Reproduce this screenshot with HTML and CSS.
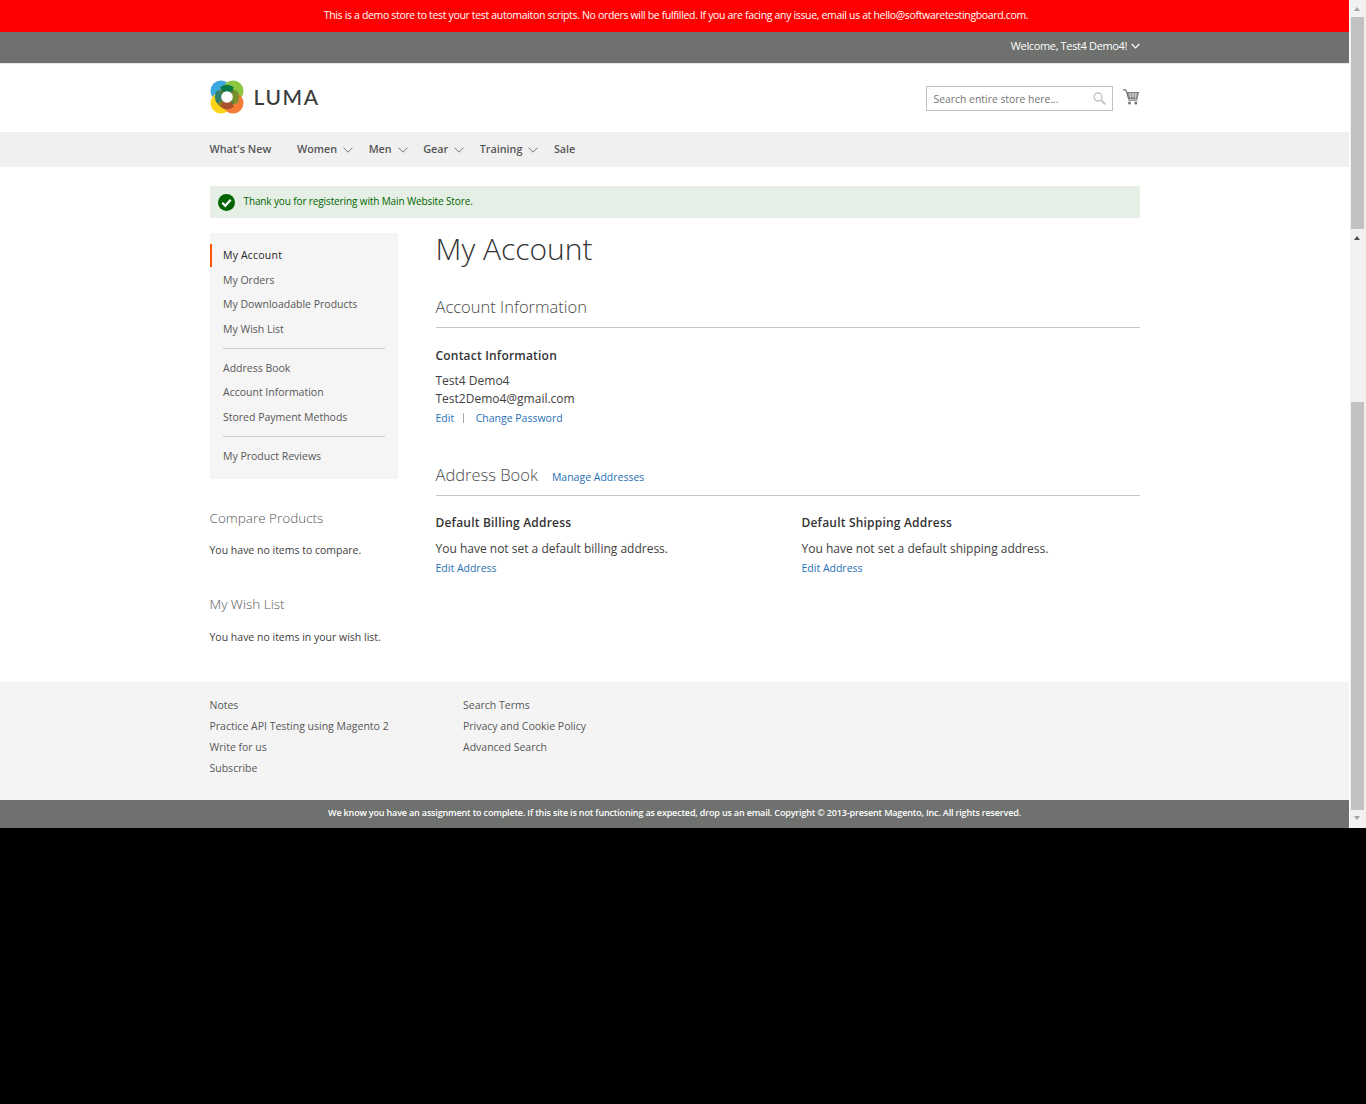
FILE: index.html
```html
<!DOCTYPE html>
<html lang="en">
<head>
<meta charset="utf-8">
<title>My Account</title>
<link rel="stylesheet" href="styles.css">
</head>
<body>
<div class="shot">
  <div class="page">
    <div class="demo-notice">This is a demo store to test your test automaiton scripts. No orders will be fulfilled. If you are facing any issue, email us at hello@softwaretestingboard.com.</div>
    <div class="panel">
      <div class="wrap panel-inner">
        <span>Welcome, Test4 Demo4!</span>
        <svg class="panel-caret" width="9" height="6" viewBox="0 0 9 6"><path d="M.7 1l3.8 3.8L8.300 1" fill="none" stroke="#fff" stroke-width="1.200"/></svg>
      </div>
    </div>
    <header class="wrap header">
      <a class="logo">
        <svg width="34" height="34" viewBox="0 0 34 34">
          <circle cx="11" cy="11" r="10.500" fill="#3ba7dc"/>
          <circle cx="23" cy="11" r="10.500" fill="#8cc63f"/>
          <circle cx="11" cy="23" r="10.500" fill="#fdd31c"/>
          <circle cx="23" cy="23" r="10.500" fill="#f47b36"/>
          <circle cx="17" cy="17" r="10" fill="#5f7d3c"/>
          <path d="M17 17L10 7.500A10.500 10.500 0 0 1 24 7.500z" fill="#0c7a45"/>
          <path d="M17 17L7.500 10A10.500 10.500 0 0 0 7.500 24z" fill="#2f7f6a"/>
          <path d="M17 17L26.500 10A10.500 10.500 0 0 1 26.500 24z" fill="#78912c"/>
          <path d="M17 17L10 26.500A10.500 10.500 0 0 0 24 26.500z" fill="#a5522a"/>
          <path d="M17 17L7.500 24 10 26.500z" fill="#8f7a25"/>
          <circle cx="17" cy="17" r="5.800" fill="#fff"/>
        </svg>
        <span class="logo-text">LUMA</span>
      </a>
      <div class="header-tools">
        <div class="search">
          <span class="search-ph">Search entire store here...</span>
          <svg width="13" height="13" viewBox="0 0 13 13"><circle cx="5" cy="5" r="4" fill="none" stroke="#c2c2c2" stroke-width="1.300"/><path d="M8 8l4.300 4.300" stroke="#c2c2c2" stroke-width="1.800"/></svg>
        </div>
        <svg class="cart" width="16" height="16" viewBox="0 0 16 16">
          <path d="M0 .8h2.600l.9 2.200" fill="none" stroke="#757575" stroke-width="1.300"/>
          <path d="M3 3h13l-1.600 7H5z" fill="#757575"/>
          <path d="M5 5h9.500M5.500 7h8.500M7 3.500l.5 6M10 3.500v6M13 3.500l-.5 6" stroke="#fff" stroke-width=".6"/>
          <path d="M5 10.500h9.500v1.200H5.600z" fill="#757575"/>
          <circle cx="6.500" cy="14" r="1.500" fill="#757575"/>
          <circle cx="12.800" cy="14" r="1.500" fill="#757575"/>
        </svg>
      </div>
    </header>
    <nav class="nav">
      <ul class="wrap nav-list">
        <li class="nav-item nav-first">What's New</li>
        <li class="nav-item">Women<svg class="nav-caret" width="10" height="6" viewBox="0 0 10 6"><path d="M.5.700L5 5.200 9.500.700" fill="none" stroke="#757575"/></svg></li>
        <li class="nav-item">Men<svg class="nav-caret" width="10" height="6" viewBox="0 0 10 6"><path d="M.5.700L5 5.200 9.500.700" fill="none" stroke="#757575"/></svg></li>
        <li class="nav-item">Gear<svg class="nav-caret" width="10" height="6" viewBox="0 0 10 6"><path d="M.5.700L5 5.200 9.500.700" fill="none" stroke="#757575"/></svg></li>
        <li class="nav-item">Training<svg class="nav-caret" width="10" height="6" viewBox="0 0 10 6"><path d="M.5.700L5 5.200 9.500.700" fill="none" stroke="#757575"/></svg></li>
        <li class="nav-item">Sale</li>
      </ul>
    </nav>
    <main class="wrap main">
      <div class="message">
        <svg width="17" height="17" viewBox="0 0 17 17"><circle cx="8.500" cy="8.500" r="8.500" fill="#006400"/><path d="M4.300 8.800l3 3 5.400-6" fill="none" stroke="#fff" stroke-width="2.200"/></svg>
        <span class="message-text">Thank you for registering with Main Website Store.</span>
      </div>
      <div class="columns">
        <aside class="sidebar">
          <div class="side-nav">
            <ul class="side-group">
              <li class="side-link current">My Account</li>
              <li class="side-link">My Orders</li>
              <li class="side-link">My Downloadable Products</li>
              <li class="side-link">My Wish List</li>
            </ul>
            <div class="side-sep"></div>
            <ul class="side-group">
              <li class="side-link">Address Book</li>
              <li class="side-link">Account Information</li>
              <li class="side-link">Stored Payment Methods</li>
            </ul>
            <div class="side-sep"></div>
            <ul class="side-group">
              <li class="side-link">My Product Reviews</li>
            </ul>
          </div>
          <div class="side-block compare">
            <div class="side-title">Compare Products</div>
            <p class="side-text">You have no items to compare.</p>
          </div>
          <div class="side-block wish">
            <div class="side-title">My Wish List</div>
            <p class="side-text">You have no items in your wish list.</p>
          </div>
        </aside>
        <section class="content">
          <h1 class="page-title">My Account</h1>
          <div class="block-title info-title"><span class="block-name">Account Information</span></div>
          <div class="box-title">Contact Information</div>
          <p class="box-text contact">Test4 Demo4<br>Test2Demo4@gmail.com</p>
          <div class="actions"><a class="link">Edit</a><span class="divider"></span><a class="link">Change Password</a></div>
          <div class="block-title book-title"><span class="block-name">Address Book</span><a class="link manage">Manage Addresses</a></div>
          <div class="addresses">
            <div class="box">
              <div class="box-title">Default Billing Address</div>
              <p class="box-text address">You have not set a default billing address.</p>
              <a class="link">Edit Address</a>
            </div>
            <div class="box">
              <div class="box-title">Default Shipping Address</div>
              <p class="box-text address">You have not set a default shipping address.</p>
              <a class="link">Edit Address</a>
            </div>
          </div>
        </section>
      </div>
    </main>
    <footer class="footer">
      <div class="wrap footer-cols">
        <ul class="footer-col first">
          <li>Notes</li>
          <li>Practice API Testing using Magento 2</li>
          <li>Write for us</li>
          <li>Subscribe</li>
        </ul>
        <ul class="footer-col">
          <li>Search Terms</li>
          <li>Privacy and Cookie Policy</li>
          <li>Advanced Search</li>
        </ul>
      </div>
    </footer>
    <div class="copyright">We know you have an assignment to complete. If this site is not functioning as expected, drop us an email. Copyright © 2013-present Magento, Inc. All rights reserved.</div>
  </div>
  <div class="scrollbar">
    <div class="arrow up"></div>
    <div class="thumb thumb-a"></div>
    <div class="arrow up second"></div>
    <div class="thumb thumb-b"></div>
    <div class="arrow down"></div>
  </div>
</div>
</body>
</html>
```
FILE: styles.css
```css
* { box-sizing: border-box; }
html, body { margin: 0; padding: 0; background: #000; }
body { font-family: "Open Sans", sans-serif; font-size: 12px; color: #333; width: 1366px; height: 1104px; overflow: hidden; }
ul { list-style: none; margin: 0; padding: 0; }
p { margin: 0; }
.shot { display: flex; width: 1366px; height: 828px; }
.page { width: 1349px; height: 828px; background: #fff; display: flex; flex-direction: column; }
.wrap { width: 930px; margin-left: 209.5px; }
.demo-notice { height: 32px; background: #f00; color: #fff; font-size: 10.5px; line-height: 31px; text-align: center; letter-spacing: -.335px; padding-left: 3px; }
.panel { height: 32px; background: #6e716e; color: #fff; border-bottom: 1px solid #e8e8e8; }
.panel-inner { display: flex; justify-content: flex-end; align-items: center; height: 27px; gap: 4px; font-size: 11px; letter-spacing: -.36px; }
.panel-caret { margin-right: -.5px; }
.header { height: 68px; padding-bottom: 3px; display: flex; justify-content: space-between; align-items: center; }
.logo { display: flex; align-items: center; gap: 10px; color: #333; }
.logo-text { font-family: "Lato", sans-serif; font-size: 21px; font-weight: 500; letter-spacing: 1.6px; color: #3a3a3a; }
.header-tools { display: flex; align-items: center; gap: 10px; }
.search { width: 187px; height: 25px; border: 1px solid #c2c2c2; display: flex; align-items: center; justify-content: space-between; padding: 0 6px 0 7px; margin-top: 3px; }
.search-ph { font-size: 10.4px; color: #757575; margin-top: 2px; }
.cart { margin-top: 1px; margin-right: 1px; }
.nav { height: 35px; background: #f0f0f0; }
.nav-list { display: flex; height: 35px; padding-bottom: 2px; align-items: center; gap: 25px; }
.nav-first { margin-right: .7px; }
.nav-item { font-size: 10.8px; font-weight: 600; color: #575757; display: flex; align-items: center; }
.nav-caret { margin-left: 6px; margin-right: -9.5px; margin-top: 2px; }
.main { flex: 1; padding-top: 19px; }
.message { height: 32px; background: #e5efe5; color: #006400; display: flex; align-items: center; gap: 8.5px; padding-left: 8.5px; }
.message-text { font-size: 10px; letter-spacing: -.12px; margin-bottom: 2px; }
.columns { display: flex; margin-top: 15px; }
.sidebar { width: 188px; flex: none; }
.side-nav { background: #f5f5f5; height: 246px; padding: 10px 0; }
.side-link { height: 24.5px; line-height: 24.5px; padding-left: 13.5px; font-size: 10.5px; color: #575757; }
.side-link.current { color: #222; font-weight: 500; letter-spacing: .2px; height: 23px; line-height: 23px; margin: 1px 0 .5px; border-left: 2px solid #ff5501; padding-left: 11.5px; }
.side-sep { height: 1px; background: #ccc; margin: 7px 13px 6.7px; }
.side-group { margin: 0; }
.side-block { color: #404040; }
.compare { margin-top: 29px; }
.wish { margin-top: 36px; }
.wish .side-text { margin-top: 15px; }
.side-title { font-size: 13.5px; font-weight: 300; line-height: 20px; color: #575757; }
.side-text { font-size: 10.5px; line-height: 16px; margin-top: 14px; }
.content { margin-left: 38px; width: 704px; flex: none; }
.page-title { margin: -1px 0 0; font-size: 30px; font-weight: 300; line-height: 33px; color: #333; }
.block-title { display: flex; align-items: flex-end; border-bottom: 1px solid #c6c6c6; height: 34px; padding-bottom: 9px; }
.info-title { margin-top: 29px; }
.book-title { margin-top: 35px; }
.block-name { font-size: 16.5px; font-weight: 300; line-height: 22px; color: #4a4a4a; }
.manage { margin-left: 14px; line-height: 16px; margin-bottom: 1px; }
.link { font-size: 10.5px; color: #1f6fb5; }
.box-title { font-size: 12px; letter-spacing: .2px; font-weight: 600; line-height: 17px; color: #333; margin-top: 19px; }
.box-text { font-size: 12px; line-height: 18px; color: #404040; }
.contact { margin-top: 8px; }
.actions { display: flex; align-items: center; line-height: 18px; margin-top: 1px; }
.divider { width: 1px; height: 10px; background: #a6a6a6; margin: 0 11.5px 0 9px; }
.addresses { display: grid; grid-template-columns: 366px 1fr; }
.addresses .box-title { margin-top: 18px; }
.address { margin-top: 9px; }
.box .link { display: block; line-height: 20px; }
.footer { height: 118px; background: #f4f4f4; padding-top: 13px; }
.footer-cols { display: flex; }
.footer-col { font-size: 10.5px; color: #575757; line-height: 21px; width: 253.5px; }
.copyright { height: 28px; background: #6e716e; color: #fff; font-size: 9px; line-height: 26px; text-align: center; font-weight: 600; letter-spacing: -.16px; }
.scrollbar { position: relative; width: 17px; height: 828px; background: #f1f1f1; border-left: 1px solid #fff; }
.thumb { position: absolute; left: 1px; width: 13px; background: #c1c1c1; }
.thumb-a { top: 17px; height: 212px; }
.thumb-b { top: 402px; height: 408px; }
.arrow { position: absolute; left: 4px; width: 0; height: 0; border-left: 3.5px solid transparent; border-right: 3.5px solid transparent; }
.arrow.up { top: 7px; border-bottom: 4px solid #a3a3a3; }
.arrow.up.second { top: 236px; border-bottom-color: #505050; }
.arrow.down { top: 816px; border-bottom: 0; border-top: 4px solid #a3a3a3; }
```
